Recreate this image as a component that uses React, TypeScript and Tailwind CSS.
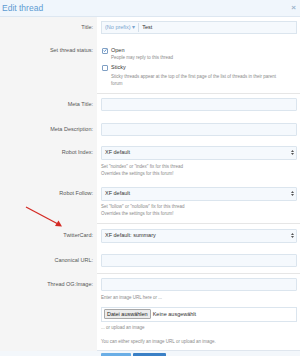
const font = { fontFamily: '"Liberation Sans", Arial, sans-serif' };

const Label = ({ text, pt = 4 }: { text: string; pt?: number }) => (
  <div
    className="w-[97px] shrink-0 bg-[#f5f5f5] text-right pr-[4px] text-[5.5px] text-[#555] leading-[13px]"
    style={{ paddingTop: pt }}
  >
    {text}
  </div>
);

const TextInput = () => (
  <div className="h-[13px] w-full border border-[#dbe5ee] bg-[#f5f9fd] rounded-[1px]" />
);

const Select = ({ value }: { value: string }) => (
  <div className="h-[14px] w-full border border-[#dbe5ee] bg-[#f5f9fd] rounded-[1px] flex items-center justify-between pl-[3px] pr-[2px]">
    <span className="text-[5.5px] text-[#333]">{value}</span>
    <svg width="3" height="5" viewBox="0 0 3 5">
      <path d="M0 2 L1.5 0 L3 2 Z M0 3 L1.5 5 L3 3 Z" fill="#555" />
    </svg>
  </div>
);

const Hint = ({ children }: { children: React.ReactNode }) => (
  <div className="text-[4.5px] leading-[7px] text-[#8a8a8a]">{children}</div>
);

const Checkbox = ({ checked }: { checked?: boolean }) => (
  <div className="w-[6px] h-[6px] border border-[#7f9fc4] bg-white rounded-[1px] flex items-center justify-center">
    {checked && (
      <svg width="5" height="5" viewBox="0 0 5 5">
        <path d="M0.8 2.6 L2 3.8 L4.3 1" stroke="#3b7bc4" strokeWidth="1" fill="none" />
      </svg>
    )}
  </div>
);

export default function App() {
  return (
    <div className="relative w-[300px] h-[356px] overflow-hidden bg-white" style={font}>
      {/* header */}
      <div className="h-[17px] bg-[#f0f6fc] border-b border-[#dde7f1] flex items-center justify-between pl-[2px] pr-[4px]">
        <span className="text-[8.5px] text-[#5e9bd2]">Edit thread</span>
        <span className="text-[8px] font-bold text-[#9cb3cb] leading-none">×</span>
      </div>

      {/* Title */}
      <div className="flex">
        <Label text="Title:" />
        <div className="flex-1 pl-[4px] pr-[3px] pt-[4px] pb-[6px]">
          <div className="h-[13px] w-full border border-[#dbe5ee] bg-[#f5f9fd] flex items-center pl-[3px] text-[5.5px]">
            <span className="text-[#7aa4cf]">(No prefix) ▾</span>
            <span className="w-px h-[9px] bg-[#d3dfea] mx-[3px]" />
            <span className="text-[#333]">Test</span>
          </div>
        </div>
      </div>

      {/* Set thread status */}
      <div className="flex">
        <Label text="Set thread status:" pt={4} />
        <div className="flex-1 pl-[5px] pr-[3px] pt-[7px] pb-[6px] border-b border-[#e6e6e6]">
          <div className="flex items-center gap-[3px] h-[7px]">
            <Checkbox checked />
            <span className="text-[5.5px] text-[#333]">Open</span>
          </div>
          <div className="pl-[9px]">
            <Hint>People may reply to this thread</Hint>
          </div>
          <div className="flex items-center gap-[3px] h-[7px] mt-[3px]">
            <Checkbox />
            <span className="text-[5.5px] text-[#333]">Sticky</span>
          </div>
          <div className="pl-[9px] pt-[1.5px]">
            <Hint>
              Sticky threads appear at the top of the first page of the list of threads in their parent
              <br />
              forum
            </Hint>
          </div>
        </div>
      </div>

      {/* Meta Title */}
      <div className="flex">
        <Label text="Meta Title:" />
        <div className="flex-1 pl-[4px] pr-[3px] pt-[4px] pb-[6px]">
          <TextInput />
        </div>
      </div>

      {/* Meta Description */}
      <div className="flex">
        <Label text="Meta Description:" pt={6} />
        <div className="flex-1 pl-[4px] pr-[3px] pt-[6px] pb-[5px]">
          <TextInput />
        </div>
      </div>

      {/* Robot Index */}
      <div className="flex">
        <Label text="Robot Index:" pt={5} />
        <div className="flex-1 pl-[4px] pr-[3px] pt-[5px] pb-[5px]">
          <Select value="XF default" />
          <div className="mt-[3px]">
            <Hint>
              Set "noindex" or "index" fix for this thread
              <br />
              Overrides the settings for this forum!
            </Hint>
          </div>
        </div>
      </div>

      {/* Robot Follow */}
      <div className="flex">
        <Label text="Robot Follow:" pt={5} />
        <div className="flex-1 pl-[4px] pr-[3px] pt-[5px] pb-[6px] border-b border-[#e6e6e6]">
          <Select value="XF default" />
          <div className="mt-[2px]">
            <Hint>
              Set "follow" or "nofollow" fix for this thread
              <br />
              Overrides the settings for this forum!
            </Hint>
          </div>
        </div>
      </div>

      {/* TwitterCard */}
      <div className="flex">
        <Label text="TwitterCard:" pt={5} />
        <div className="flex-1 pl-[4px] pr-[3px] pt-[5px] pb-[6px]">
          <Select value="XF default: summary" />
        </div>
      </div>

      {/* Canonical URL */}
      <div className="flex">
        <Label text="Canonical URL:" pt={5} />
        <div className="flex-1 pl-[4px] pr-[3px] pt-[5px] pb-[6px] border-b border-[#e6e6e6]">
          <TextInput />
        </div>
      </div>

      {/* Thread OG:Image */}
      <div className="flex">
        <Label text="Thread OG:Image:" pt={4} />
        <div className="flex-1 pl-[4px] pr-[3px] pt-[4px] pb-[5px] border-b border-[#dfe6ee]">
          <TextInput />
          <div className="mt-[3px]">
            <Hint>Enter an image URL here or ...</Hint>
          </div>
          <div className="mt-[6px] h-[15px] w-full border border-[#dbe5ee] bg-white flex items-center pl-[2px] gap-[2px]">
            <span className="h-[10px] px-[2px] border border-[#a9a9a9] bg-[#ececec] rounded-[1px] text-[5.5px] leading-[8px] text-[#222]">
              Datei auswählen
            </span>
            <span className="text-[5.5px] text-[#333]">Keine ausgewählt</span>
          </div>
          <div className="mt-[2px]">
            <Hint>... or upload an image</Hint>
          </div>
          <div className="mt-[7px]">
            <Hint>You can either specify an image URL or upload an image.</Hint>
          </div>
        </div>
      </div>

      {/* footer */}
      <div className="flex h-[10px] bg-[#f3f7fb]">
        <div className="w-[97px] shrink-0" />
        <div className="flex gap-[2px] pl-[4px] pt-[2px]">
          <div className="w-[30px] h-[10px] bg-[#6aaee6] rounded-[1px]" />
          <div className="w-[33px] h-[10px] bg-[#3a80c6] rounded-[1px]" />
        </div>
      </div>

      {/* red annotation arrow */}
      <svg className="absolute left-0 top-0 pointer-events-none" width="300" height="356">
        <line x1="26" y1="207" x2="58" y2="224" stroke="#d42a24" strokeWidth="1.3" />
        <path d="M62 226.5 L55 226 L58.5 220.5 Z" fill="#d42a24" />
      </svg>
    </div>
  );
}
